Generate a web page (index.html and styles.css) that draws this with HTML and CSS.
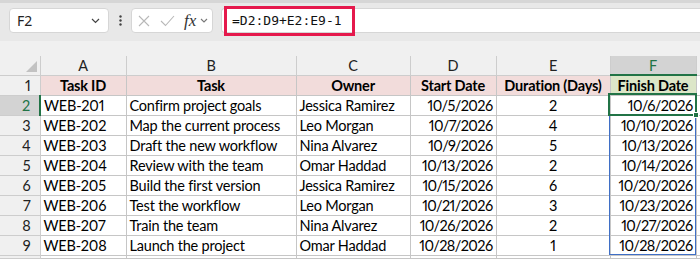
FILE: index.html
```html
<!DOCTYPE html>
<html lang="en">
<head>
  <meta charset="UTF-8">
  <title>Finish Date</title>
  <link rel="stylesheet" href="styles.css">
</head>
<body>

<div class="topline"></div>

<div class="toolbar">
  <div class="namebox">
    <span>F2</span>
    <svg class="chev" width="9" height="6" viewBox="0 0 9 6"><path d="M1 1 L4.5 4.5 L8 1" fill="none" stroke="#444" stroke-width="1.2"/></svg>
  </div>
  <div class="dots">
    <svg width="3" height="11" viewBox="0 0 3 11"><circle cx="1.5" cy="1.5" r="1.2" fill="#444"/><circle cx="1.5" cy="5.5" r="1.2" fill="#444"/><circle cx="1.5" cy="9.5" r="1.2" fill="#444"/></svg>
  </div>
  <div class="fxbox">
    <svg width="12" height="12" viewBox="0 0 12 12"><path d="M1 1 L11 11 M11 1 L1 11" stroke="#b8b8b8" stroke-width="1.1"/></svg>
    <svg width="15" height="12" viewBox="0 0 15 12"><path d="M1 6 L5.5 10.5 L14 1" fill="none" stroke="#b8b8b8" stroke-width="1.1"/></svg>
    <span class="fx">fx</span>
    <svg width="8" height="6" viewBox="0 0 8 6"><path d="M1 1 L4 4 L7 1" fill="none" stroke="#777" stroke-width="1.1"/></svg>
  </div>
  <div class="formula">
    <span class="hl">=D2:D9+E2:E9-1</span>
  </div>
</div>

<div class="sheet">
  <div class="gridwrap">
    <table class="grid">
      <colgroup>
        <col style="width:40px">
        <col style="width:86px">
        <col style="width:170px">
        <col style="width:114px">
        <col style="width:86px">
        <col style="width:114px">
        <col style="width:86px">
        <col style="width:30px">
      </colgroup>
      <thead>
        <tr class="colhead">
          <th class="corner"><span class="tri"></span></th>
          <th>A</th><th>B</th><th>C</th><th>D</th><th>E</th><th class="sel">F</th><th></th>
        </tr>
      </thead>
      <tbody>
        <tr class="titles">
          <th class="rh">1</th>
          <td>Task ID</td><td>Task</td><td>Owner</td><td>Start Date</td><td>Duration (Days)</td><td class="fin">Finish Date</td><td class="blank"></td>
        </tr>
        <tr>
          <th class="rh sel">2</th>
          <td>WEB-201</td><td>Confirm project goals</td><td>Jessica Ramirez</td><td class="num">10/5/2026</td><td class="mid">2</td><td class="num">10/6/2026</td><td></td>
        </tr>
        <tr>
          <th class="rh">3</th>
          <td>WEB-202</td><td>Map the current process</td><td>Leo Morgan</td><td class="num">10/7/2026</td><td class="mid">4</td><td class="num">10/10/2026</td><td></td>
        </tr>
        <tr>
          <th class="rh">4</th>
          <td>WEB-203</td><td>Draft the new workflow</td><td>Nina Alvarez</td><td class="num">10/9/2026</td><td class="mid">5</td><td class="num">10/13/2026</td><td></td>
        </tr>
        <tr>
          <th class="rh">5</th>
          <td>WEB-204</td><td>Review with the team</td><td>Omar Haddad</td><td class="num">10/13/2026</td><td class="mid">2</td><td class="num">10/14/2026</td><td></td>
        </tr>
        <tr>
          <th class="rh">6</th>
          <td>WEB-205</td><td>Build the first version</td><td>Jessica Ramirez</td><td class="num">10/15/2026</td><td class="mid">6</td><td class="num">10/20/2026</td><td></td>
        </tr>
        <tr>
          <th class="rh">7</th>
          <td>WEB-206</td><td>Test the workflow</td><td>Leo Morgan</td><td class="num">10/21/2026</td><td class="mid">3</td><td class="num">10/23/2026</td><td></td>
        </tr>
        <tr>
          <th class="rh">8</th>
          <td>WEB-207</td><td>Train the team</td><td>Nina Alvarez</td><td class="num">10/26/2026</td><td class="mid">2</td><td class="num">10/27/2026</td><td></td>
        </tr>
        <tr>
          <th class="rh">9</th>
          <td>WEB-208</td><td>Launch the project</td><td>Omar Haddad</td><td class="num">10/28/2026</td><td class="mid">1</td><td class="num">10/28/2026</td><td></td>
        </tr>
        <tr class="last">
          <th class="rh"></th>
          <td></td><td></td><td></td><td></td><td></td><td></td><td></td>
        </tr>
      </tbody>
    </table>

    <div class="spill"></div>
    <div class="active"></div>
    <div class="handle"></div>
  </div>
</div>

</body>
</html>
```

FILE: styles.css
```css
body {
  margin: 0;
  width: 700px;
  height: 259px;
  overflow: hidden;
  background-color: #f0f0f0;
  font-family: "Noto Sans", sans-serif;
}

.topline {
  height: 3px;
  background-color: #d6d6d6;
  box-shadow: 0 1px 2px rgba(0, 0, 0, 0.08);
}

.toolbar {
  display: flex;
  height: 38px;
  box-sizing: border-box;
  padding: 5px 0 0 9px;
  background-color: #e8e8e8;
}

.namebox {
  width: 100px;
  height: 25px;
  box-sizing: border-box;
  display: flex;
  align-items: center;
  justify-content: space-between;
  padding: 0 8px 0 7px;
  background-color: #fff;
  border: 1px solid #d6d6d6;
  border-radius: 4px;
  font-size: 14px;
  color: #222;
}

.dots {
  width: 22px;
  height: 25px;
  display: flex;
  align-items: center;
  justify-content: center;
}

.fxbox {
  width: 82px;
  height: 25px;
  box-sizing: border-box;
  display: flex;
  align-items: center;
  gap: 10px;
  padding-left: 6px;
  background-color: #fff;
  border: 1px solid #d6d6d6;
  border-radius: 4px;
}

.fx {
  font-family: "Liberation Serif", serif;
  font-style: italic;
  font-size: 17px;
  color: #333;
  margin-left: -1px;
  margin-right: -6px;
}

.formula {
  flex: 1;
  height: 25px;
  box-sizing: border-box;
  margin-left: 8px;
  display: flex;
  align-items: center;
  padding-left: 2px;
  background-color: #fff;
  border: 1px solid #d6d6d6;
  border-right: none;
  border-radius: 4px 0 0 4px;
}

.hl {
  width: 131px;
  height: 30px;
  box-sizing: border-box;
  border: 3px solid #e5194c;
  display: flex;
  align-items: center;
  padding-left: 5px;
  font-family: "DejaVu Sans Mono", monospace;
  font-size: 13px;
  color: #111;
}

.sheet {
  padding-top: 15px;
}

.gridwrap {
  position: relative;
}

.grid {
  table-layout: fixed;
  border-collapse: collapse;
  width: 726px;
  font-family: "Lato", sans-serif;
  font-size: 14.5px;
  letter-spacing: -0.2px;
  font-variant-numeric: proportional-nums;
  color: #000;
}

.grid th,
.grid td {
  height: 19px;
  padding: 0 3px;
  border: 1px solid #c6c6c6;
  white-space: nowrap;
  overflow: hidden;
  text-align: left;
  font-weight: normal;
  background-color: #fff;
}

.grid .colhead th {
  height: 18px;
  text-align: center;
  background-color: #f0f0f0;
  color: #222;
  border-top: none;
  border-color: #cdcdcd;
}

.grid .colhead th.sel {
  background-color: #d3d3d3;
  color: #217346;
  border-bottom: 2px solid #217346;
}

.grid th.corner {
  position: relative;
  border-left: none;
}

.tri {
  position: absolute;
  right: 3px;
  bottom: 3px;
  width: 0;
  height: 0;
  border-left: 11px solid transparent;
  border-bottom: 11px solid #c2c2c2;
}

.grid th.rh {
  text-align: right;
  padding-right: 9px;
  background-color: #f0f0f0;
  color: #222;
  border-left: none;
  border-color: #cdcdcd;
}

.grid th.rh.sel {
  background-color: #d3d3d3;
  color: #217346;
  border-right: 2px solid #217346;
}

.grid tr.last th,
.grid tr.last td {
  height: 2px;
}

.titles td {
  background-color: #f2dcdb;
  font-weight: bold;
  text-align: center;
}

.titles td.fin {
  background-color: #dce6c8;
}

.titles td.blank {
  background-color: #fff;
}

.grid td.num {
  text-align: right;
  letter-spacing: -0.6px;
}

.grid td.mid {
  text-align: center;
}

.spill {
  position: absolute;
  left: 609px;
  top: 38px;
  width: 87px;
  height: 161px;
  border: 1px solid #3f6fc6;
  box-sizing: border-box;
}

.active {
  position: absolute;
  left: 608px;
  top: 37px;
  width: 89px;
  height: 23px;
  box-sizing: border-box;
  border: 2px solid #217346;
}

.handle {
  position: absolute;
  left: 693px;
  top: 56px;
  width: 6px;
  height: 6px;
  box-sizing: border-box;
  background-color: #217346;
  border: 1px solid #fff;
}
```
